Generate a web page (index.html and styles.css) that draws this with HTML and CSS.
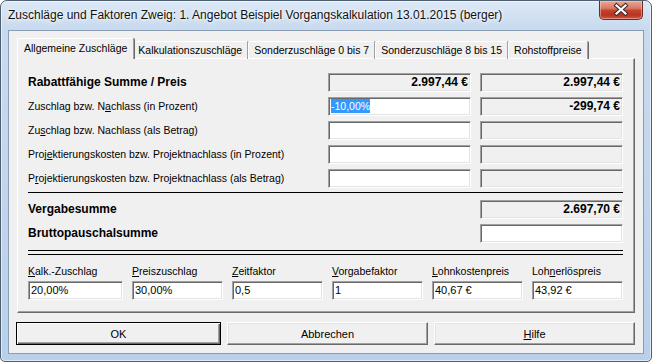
FILE: index.html
```html
<!DOCTYPE html>
<html lang="de">
<head>
    <meta charset="UTF-8">
    <title>Zuschläge und Faktoren</title>
    <link rel="stylesheet" href="styles.css">
</head>
<body>
    <div class="window">
        <div class="titlebar">
            <span class="title">Zuschläge und Faktoren Zweig: 1. Angebot Beispiel Vorgangskalkulation 13.01.2015 (berger)</span>
            <div class="close">
                <svg width="44" height="19" viewBox="0 0 44 19">
                    <path d="M17.5 5.5 L26.5 13.5 M26.5 5.5 L17.5 13.5" stroke="#3d2a2a" stroke-width="4.2" stroke-linecap="square" fill="none"/>
                    <path d="M17.5 5.5 L26.5 13.5 M26.5 5.5 L17.5 13.5" stroke="#fff" stroke-width="2.2" stroke-linecap="square" fill="none"/>
                </svg>
            </div>
        </div>

        <div class="client">
            <div class="tabs">
                <div class="tab active">Allgemeine Zuschläge</div>
                <div class="tab">Kalkulationszuschläge</div>
                <div class="tab">Sonderzuschläge 0 bis 7</div>
                <div class="tab">Sonderzuschläge 8 bis 15</div>
                <div class="tab">Rohstoffpreise</div>
            </div>

            <div class="panel">
                <div class="grid">
                    <div class="label bold">Rabattfähige Summe / Preis</div>
                    <div class="box ro value">2.997,44 €</div>
                    <div class="box ro value">2.997,44 €</div>

                    <div class="label">Zuschlag bzw. N<u>a</u>chlass (in Prozent)</div>
                    <div class="box"><span class="sel">-10,00%</span></div>
                    <div class="box ro value">-299,74 €</div>

                    <div class="label">Zu<u>s</u>chlag bzw. Nachlass (als Betrag)</div>
                    <div class="box"></div>
                    <div class="box ro"></div>

                    <div class="label">Proj<u>e</u>ktierungskosten bzw. Projektnachlass (in Prozent)</div>
                    <div class="box"></div>
                    <div class="box ro"></div>

                    <div class="label">P<u>r</u>ojektierungskosten bzw. Projektnachlass (als Betrag)</div>
                    <div class="box"></div>
                    <div class="box ro"></div>
                </div>

                <div class="rule"></div>

                <div class="grid">
                    <div class="label bold">Vergabesumme</div>
                    <div></div>
                    <div class="box ro value">2.697,70 €</div>

                    <div class="label bold">Bruttopauschalsumme</div>
                    <div></div>
                    <div class="box"></div>
                </div>

                <div class="rule double"></div>

                <div class="factors">
                    <div class="field">
                        <div class="flabel"><u>K</u>alk.-Zuschlag</div>
                        <div class="box text">20,00%</div>
                    </div>
                    <div class="field">
                        <div class="flabel"><u>P</u>reiszuschlag</div>
                        <div class="box text">30,00%</div>
                    </div>
                    <div class="field">
                        <div class="flabel"><u>Z</u>eitfaktor</div>
                        <div class="box text">0,5</div>
                    </div>
                    <div class="field">
                        <div class="flabel"><u>V</u>orgabefaktor</div>
                        <div class="box text">1</div>
                    </div>
                    <div class="field">
                        <div class="flabel"><u>L</u>ohnkostenpreis</div>
                        <div class="box text">40,67 €</div>
                    </div>
                    <div class="field">
                        <div class="flabel">Loh<u>n</u>erlöspreis</div>
                        <div class="box text">43,92 €</div>
                    </div>
                </div>
            </div>

            <div class="buttons">
                <button class="button default">OK</button>
                <button class="button">Abbrechen</button>
                <button class="button"><u>H</u>ilfe</button>
            </div>
        </div>
    </div>
</body>
</html>
```

FILE: styles.css
```css
body {
    margin: 0;
    width: 652px;
    height: 362px;
    overflow: hidden;
    font-family: "Liberation Sans", Arial, sans-serif;
    font-size: 10.5px;
    color: #000;
    background: #fff;
}

.window {
    box-sizing: border-box;
    width: 652px;
    height: 362px;
    border: 1px solid #4f5f72;
    border-radius: 7px 7px 5px 5px;
    background: linear-gradient(180deg, #dce8f6 0, #c8daef 28px, #b9d0ea 100%);
    box-shadow: inset 0 0 0 1px rgba(255, 255, 255, 0.55);
    display: flex;
    flex-direction: column;
}

.titlebar {
    height: 29px;
    display: flex;
    justify-content: space-between;
    align-items: flex-start;
    padding-left: 7px;
    padding-right: 8px;
}

.title {
    font-size: 12px;
    line-height: 28px;
    color: #101010;
    text-shadow: 0 0 6px #fff, 0 0 3px #fff;
    white-space: nowrap;
}

.close {
    width: 44px;
    height: 19px;
    box-sizing: border-box;
    border: 1px solid #6b2a22;
    border-top: none;
    border-radius: 0 0 5px 5px;
    background: linear-gradient(180deg, #e9a696 0, #d97a66 40%, #c7432d 52%, #b93221 78%, #d2583e 100%);
    box-shadow: inset 0 0 0 1px rgba(255, 220, 210, 0.45);
}

.close svg {
    display: block;
    margin: -1px 0 0 -1px;
}

.client {
    flex: 1;
    margin: 0 7px 7px 7px;
    box-sizing: border-box;
    border: 1px solid #8a9db3;
    background: #f0f0f0;
    padding: 8px 8px 0 8px;
    display: flex;
    flex-direction: column;
}

.tabs {
    display: flex;
    align-items: flex-end;
    height: 20px;
    padding-left: 2px;
    margin-bottom: -1px;
    position: relative;
    z-index: 1;
}

.tab {
    height: 18px;
    box-sizing: border-box;
    padding: 0 5px 0 5px;
    line-height: 17px;
    border: 1px solid;
    border-color: #fff #a0a0a0 transparent #fff;
    border-bottom: none;
    border-radius: 2px 2px 0 0;
    box-shadow: 1px 0 0 #696969;
    white-space: nowrap;
}

.tab.active {
    height: 21px;
    margin: 0 -2px;
    padding: 0 6px;
    line-height: 18px;
    background: #f0f0f0;
    position: relative;
    z-index: 2;
}

.panel {
    height: 255px;
    box-sizing: border-box;
    border: 1px solid;
    border-color: #fff #696969 #696969 #fff;
    box-shadow: inset -1px -1px 0 #a0a0a0;
    padding: 14px 11px 0 10px;
}

.grid {
    display: grid;
    grid-template-columns: 1fr 143px 143px;
    grid-auto-rows: 19px;
    column-gap: 9px;
    row-gap: 5px;
}

.label {
    line-height: 19px;
    white-space: nowrap;
}

.bold {
    font-weight: bold;
    font-size: 12px;
}

.box {
    height: 19px;
    box-sizing: border-box;
    border: 1px solid;
    border-color: #a0a0a0 #fff #fff #a0a0a0;
    box-shadow: inset 1px 1px 0 #696969, inset -1px -1px 0 #e3e3e3;
    background: #fff;
    padding: 0 2px 0 2px;
    line-height: 17px;
    white-space: nowrap;
    overflow: hidden;
}

.box.ro {
    background: #f0f0f0;
}

.value {
    text-align: right;
    font-weight: bold;
    font-size: 12px;
}

.sel {
    background: #3399ff;
    color: #fff;
    padding: 1px 0;
}

.rule {
    height: 0;
    border-top: 1px solid #000;
    margin: 4px 0 7px 0;
}

.rule.double {
    height: 3px;
    border-bottom: 1px solid #000;
    margin: 7px 0 9px 0;
}

.factors {
    display: grid;
    grid-template-columns: 95px repeat(5, 91px);
    column-gap: 9px;
}

.flabel {
    line-height: 15px;
    margin-bottom: 2px;
    white-space: nowrap;
}

.box.text {
    height: 19px;
    font-size: 11px;
}

.buttons {
    display: grid;
    grid-template-columns: 205px 1fr 1fr;
    column-gap: 6px;
    margin: 9px 0 0 -1px;
}

.button {
    height: 23px;
    font-family: "Liberation Sans", Arial, sans-serif;
    font-size: 11px;
    color: #000;
    background: #f0f0f0;
    border: 1px solid;
    border-color: #fff #696969 #696969 #fff;
    box-shadow: inset -1px -1px 0 #a0a0a0, inset 1px 1px 0 #e3e3e3;
    padding: 0;
}

.button.default {
    border-color: #000;
    box-shadow: inset 1px 1px 0 #fff, inset -1px -1px 0 #696969, inset -2px -2px 0 #a0a0a0;
}
```
